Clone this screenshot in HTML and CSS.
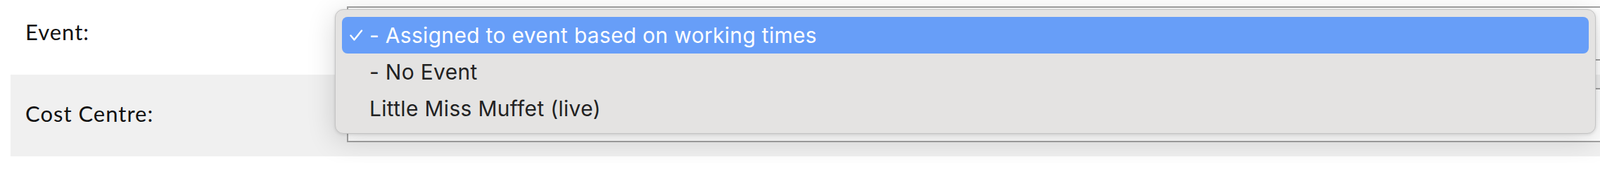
FILE: index.html
```html
<!DOCTYPE html>
<html lang="en">
<head>
<meta charset="utf-8">
<title>Event form</title>
<link rel="stylesheet" href="styles.css">
</head>
<body>
<div class="form">
  <div class="row row-event">
    <label class="label">Event:</label>
    <div class="select-box"></div>
  </div>
  <div class="row row-cost">
    <label class="label">Cost Centre:</label>
    <div class="select-box"></div>
  </div>
</div>
<div class="menu">
  <div class="item selected">
    <svg class="check" width="20" height="18" viewBox="0 0 20 18"><path d="M2.5 9.5 L7.5 15.5 L18 2.5" fill="none" stroke="#fff" stroke-width="2.4" stroke-linecap="round" stroke-linejoin="round"/></svg>
    <span class="text">- Assigned to event based on working times</span>
  </div>
  <div class="item"><span class="text">- No Event</span></div>
  <div class="item"><span class="text">Little Miss Muffet (live)</span></div>
</div>
</body>
</html>
```

FILE: styles.css
```css
html, body {
  margin: 0;
  padding: 0;
}
body {
  width: 2274px;
  height: 232px;
  overflow: hidden;
  background: #ffffff;
  position: relative;
}
.form {
  padding-left: 15px;
}
.row {
  display: flex;
  align-items: center;
}
.row-event {
  padding: 9px 0 20px;
  background: #ffffff;
}
.row-cost {
  padding: 19px 0 20px;
  background: #f0f0f0;
}
.label {
  width: 478px;
  box-sizing: border-box;
  padding-left: 21px;
  padding-bottom: 6px;
  font-family: "Lato", "Liberation Sans", sans-serif;
  font-size: 31px;
  letter-spacing: 1px;
  color: #111111;
  font-weight: 400;
}
.select-box {
  flex: 1;
  height: 77px;
  box-sizing: border-box;
  border: 2px solid #a3a3a3;
  background: #ffffff;
  margin-right: -60px;
}
.menu {
  position: absolute;
  left: 476px;
  top: 13px;
  width: 1792px;
  height: 177px;
  box-sizing: border-box;
  padding: 10px 9px;
  background: #e4e3e2;
  border: 1px solid #c4c4c4;
  border-radius: 12px;
  box-shadow: 0 8px 40px rgba(0, 0, 0, 0.16), 0 1px 4px rgba(0, 0, 0, 0.12);
}
.item {
  height: 52px;
  display: flex;
  align-items: center;
  padding-left: 39px;
  position: relative;
  border-radius: 8px;
  font-family: "Inter", "Roboto", sans-serif;
  font-size: 30px;
  letter-spacing: 0.3px;
  color: #222222;
}
.item.selected {
  background: #679ef8;
  color: #ffffff;
}
.check {
  position: absolute;
  left: 10px;
  top: 17px;
}
```
